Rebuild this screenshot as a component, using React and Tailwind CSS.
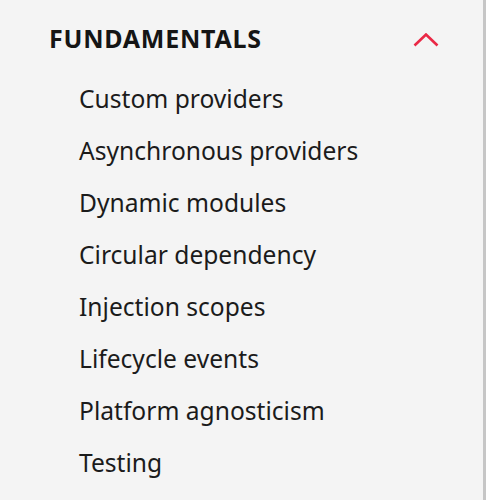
import React, { useState } from 'react';

const items = [
  'Custom providers',
  'Asynchronous providers',
  'Dynamic modules',
  'Circular dependency',
  'Injection scopes',
  'Lifecycle events',
  'Platform agnosticism',
  'Testing',
];

const ChevronUp = () => (
  <svg width="26" height="14" viewBox="0 0 26 14" fill="none" className="block">
    <path d="M1.5 12.5L13 1.5L24.5 12.5" stroke="#ea2845" strokeWidth="2.6" />
  </svg>
);

export default function App() {
  const [open, setOpen] = useState(true);

  return (
    <div className="h-[500px] w-[486px] overflow-hidden border-r-[3px] border-[#c6c6c6] bg-[#f4f4f4] font-['Noto_Sans',sans-serif]">
      <button
        type="button"
        onClick={() => setOpen((prev) => !prev)}
        className="flex h-[40px] w-full items-center justify-between pl-[49px] pr-[44px] mt-[18px] text-left"
      >
        <span className="text-[25px] font-bold leading-[40px] tracking-[0.75px] text-[#151515]">FUNDAMENTALS</span>
        <span className="mt-[3px]">
          <ChevronUp />
        </span>
      </button>
      {open ? (
        <ul className="mt-[15px] pl-[79px]">
          {items.map((item) => (
            <li key={item} className="text-[24.6px] leading-[52px] text-[#1b1b1b]">
              {item}
            </li>
          ))}
        </ul>
      ) : null}
    </div>
  );
}
